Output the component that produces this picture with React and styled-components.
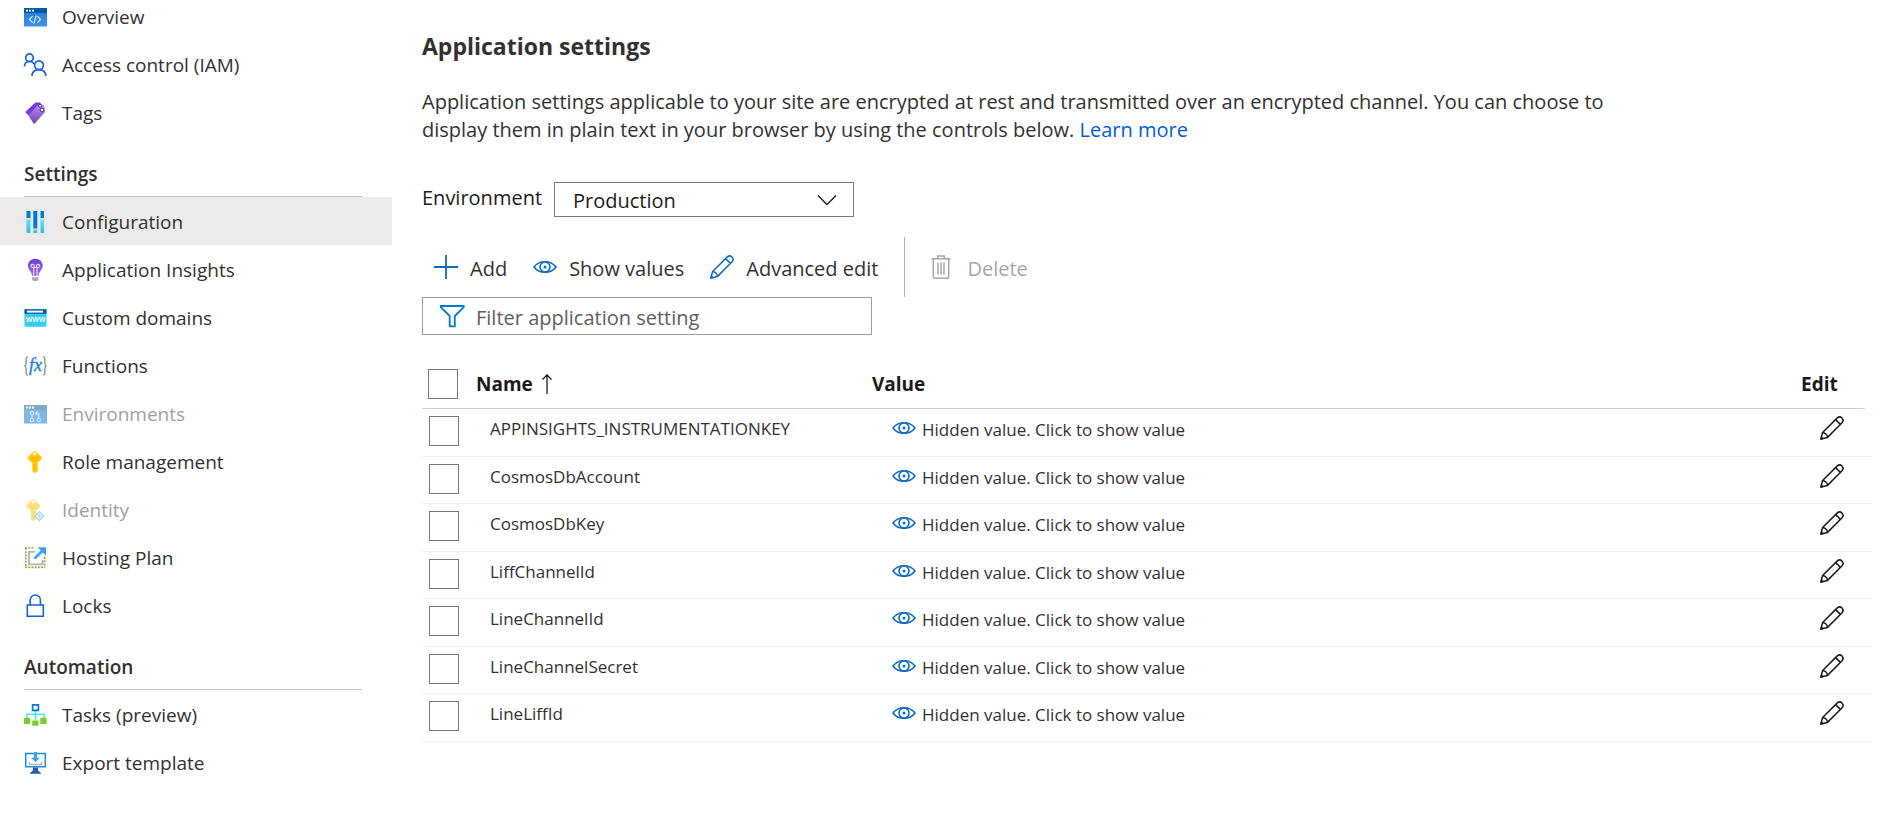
import React from "react";
import styled, { createGlobalStyle, css } from "styled-components";

const GlobalStyle = createGlobalStyle`
  *, *::before, *::after { box-sizing: border-box; }
  body {
    margin: 0;
    background: #fff;
    color: #323130;
    font-family: "Open Sans", "Noto Sans", sans-serif;
    font-size: 19px;
    line-height: 28px;
    overflow: hidden;
  }
  button, input, select { font: inherit; color: inherit; }
`;

/* ---------- icons ---------- */

const Svg = styled.svg`
  display: block;
  flex: none;
  overflow: visible;
`;

const Icon = ({ size = 24, children, ...rest }) => (
  <Svg width={size} height={size} viewBox="0 0 24 24" fill="none" aria-hidden="true" {...rest}>
    {children}
  </Svg>
);

const OverviewIcon = () => (
  <Icon>
    <defs>
      <linearGradient id="ov" x1="0" y1="8" x2="0" y2="22" gradientUnits="userSpaceOnUse">
        <stop stopColor="#2a7fd9" /><stop offset="1" stopColor="#3f94e8" />
      </linearGradient>
    </defs>
    <rect y="3" width="23" height="18.5" rx=".6" fill="url(#ov)" />
    <path d="M0 3.600a.6.6 0 0 1 .6-.6h21.800a.6.6 0 0 1 .6.6V8H0z" fill="#005ba1" />
    <path d="M2 4.800h2v1.800H2zM5 4.800h2v1.800H5zM8 4.800h2v1.800H8z" fill="#fff" />
    <path d="M8.600 11.200 5.400 14.500l3.200 3.200M13.400 11.200l3.200 3.300-3.200 3.200M12.200 10.400 9.800 18.600" stroke="#d6e9fb" strokeWidth="1.200" />
  </Icon>
);

const AccessIcon = () => (
  <Icon stroke="#0f62e0" strokeWidth="1.700">
    <circle cx="5.500" cy="4.700" r="3.800" />
    <circle cx="15" cy="12.200" r="4.400" />
    <path d="M.4 13.500C.6 10.500 2.600 8.500 5.500 8.500c2 0 3.800.9 4.700 2.500M7.900 22.900c.4-3.900 3-6.300 7-6.300s6.600 2.400 7 6.300" />
  </Icon>
);

const TagIcon = () => (
  <Icon>
    <defs>
      <linearGradient id="tg" x1="12" y1="2" x2="11" y2="23" gradientUnits="userSpaceOnUse">
        <stop stopColor="#b796f9" /><stop offset="1" stopColor="#7246ad" />
      </linearGradient>
    </defs>
    <path d="M11.500 1.500h4.500L18 4 6 15.500 1.700 11.700c-.3-.3-.3-.8 0-1.100z" fill="#773adc" />
    <path d="M14.500 3.300 20 4.300l1.200 5.800c0 .6-.1 1-.5 1.400L10.800 22.500c-.4.4-.8.4-1.200 0L5 15.500c-.5-.6-.5-1 0-1.500z" fill="url(#tg)" />
    <circle cx="16" cy="4.700" r="1.500" fill="#fff" stroke="#552f99" />
    <circle cx="18" cy="9" r="1.800" fill="#fff" stroke="#552f99" />
  </Icon>
);

const ConfigIcon = () => (
  <Icon>
    <defs>
      <linearGradient id="cf" x1="0" y1="10" x2="0" y2="23" gradientUnits="userSpaceOnUse">
        <stop stopColor="#50e6ff" /><stop offset="1" stopColor="#32bedd" />
      </linearGradient>
    </defs>
    <path d="M2.500 1h4v7h-4zM9.300 1h4v17.500h-4zM16.500 1h3.500v7h-3.500z" fill="#0078d4" />
    <path d="M2.500 10h4v13h-4zM9.300 20.300h4V23h-4zM16.500 10H20v13h-3.500z" fill="url(#cf)" />
    <path d="M2 9h5M9 19.400h4.800M16 9h4.500" stroke="#c8c8c8" />
  </Icon>
);

const InsightsIcon = () => (
  <Icon>
    <defs>
      <linearGradient id="ai" x1="0" y1="1" x2="0" y2="18" gradientUnits="userSpaceOnUse">
        <stop stopColor="#6a45c8" /><stop offset="1" stopColor="#a06bf5" />
      </linearGradient>
    </defs>
    <path d="M11.300.7c4.200 0 7.400 3.100 7.400 7.100 0 4.300-3.900 5.300-4.100 10.200H8c-.2-4.900-4.100-5.900-4.100-10.200C3.900 3.800 7.100.7 11.300.7z" fill="url(#ai)" />
    <path d="M9.700 18V9.500H8.500a1.600 1.600 0 1 1 1.700-1.700v1.700h2.300V7.800a1.600 1.600 0 1 1 1.700 1.700H13V18" stroke="#e6d8fa" strokeWidth="1.200" />
    <path d="M8 19.200h6.600v2.200L13 23H9.700L8 21.400z" fill="#a9a9a9" />
  </Icon>
);

const WwwText = styled.text`
  font: 600 8px "Open Sans", sans-serif;
`;

const DomainsIcon = () => (
  <Icon>
    <path d="M.5 3.500h22V20a.7.7 0 0 1-.7.700H1.200A.7.7 0 0 1 .5 20z" fill="#32cdf0" />
    <path d="M.5 3.200h22v4.600H.5z" fill="#005ba1" />
    <path d="M3 4.600h16v2H3z" fill="#fff" />
    <WwwText x="11.500" y="16" textAnchor="middle" fill="#fff">www</WwwText>
  </Icon>
);

const FxText = styled.text`
  font: italic 400 18px "Liberation Serif", serif;
`;

const FunctionsIcon = () => (
  <Icon>
    <path d="M4 3C1.800 3 2.200 4.500 2.200 7.500S2 12 .3 12c1.700 0 1.900 1.500 1.900 4.500S1.800 21 4 21M19 3c2.200 0 1.800 1.500 1.800 4.500s.2 4.500 1.900 4.500c-1.700 0-1.900 1.500-1.900 4.500s.4 4.500-1.800 4.500" stroke="#999" strokeWidth="1.500" />
    <FxText x="11.500" y="16.500" textAnchor="middle" fill="#1f80e0" stroke="#1f80e0" strokeWidth=".4">fx</FxText>
  </Icon>
);

const EnvironmentsIcon = () => (
  <Icon>
    <rect y="3" width="23" height="18.500" rx=".6" fill="#7fb8e6" />
    <path d="M0 3h23v4.700H0z" fill="#7fa9cc" />
    <path d="M2 4.500h2v2H2zM5 4.500h2v2H5zM8 4.500h2v2H8z" fill="#fff" />
    <g stroke="#d4e8f8" strokeWidth="1.100">
      <circle cx="8" cy="11.300" r="1.700" />
      <circle cx="8" cy="18" r="1.700" />
      <circle cx="14.700" cy="18" r="1.700" />
      <path d="M8 13v3.300M14.700 16.300v-5h-3M13.500 9.500l-2 1.800 2 1.800" />
    </g>
  </Icon>
);

const KeyShape = () => (
  <>
    <path d="M9.500 1.400c.8-.7 1.700-.7 2.500 0l5.600 5.500c.6.600.6 1.300 0 2L13.700 13v8.200L11.500 23h-1L8.300 21v-8L4 8.900c-.6-.7-.6-1.400 0-2z" fill="#ffca0a" />
    <path d="M7 7.700h8M7 9.800h8" stroke="#ffa800" strokeWidth="1.100" />
    <path d="M10.300 13.500V21" stroke="#ff9c00" strokeOpacity=".6" />
    <circle cx="10.800" cy="3.800" r="1.500" fill="#fff" />
  </>
);

const RoleIcon = () => <Icon><KeyShape /></Icon>;

const IdentityIcon = () => (
  <Icon opacity=".5">
    <g transform="translate(-1.500 0)"><KeyShape /></g>
    <path d="m15.300 13.600 4.900 4.700-4.900 4.500-4.900-4.500z" fill="#7cc4e8" stroke="#3a9bd0" />
    <path d="m12.500 18.500 2.800-3.500 2.800 3.500-2.800 2z" stroke="#e8f6fd" />
  </Icon>
);

const HostingIcon = () => (
  <Icon>
    <path d="M1 2h9M1.800 2v19.600M1 21.400h20M20.600 11v10.500" stroke="#7fba2c" strokeWidth="1.600" strokeDasharray="2 1.200" />
    <path d="M11 5.800H5v12.500h13.500V14" stroke="#b3b3b3" strokeWidth="1.800" />
    <path d="M10.500 12.500 18 5.200" stroke="#3fa0ec" strokeWidth="2.800" />
    <path d="M13.500 1.300H22v8.500z" fill="#3fa0ec" />
  </Icon>
);

const LockIcon = () => (
  <Icon stroke="#0f62e0" strokeWidth="1.600">
    <path d="M3.300 11h16v11.300h-16zM6.200 11V6.300C6.200 3.200 8.400 1 11.300 1s5.100 2.200 5.100 5.300V11" />
  </Icon>
);

const TasksIcon = () => (
  <Icon>
    <path d="M11.500 8v9M3 15v-3.800h17V15" stroke="#50e6ff" strokeWidth="1.600" />
    <path d="M8.600 1.800h5.800v5.600H8.600z" stroke="#0078d4" strokeWidth="1.700" />
    <path d="M0 14.800h6.200V21H0zM8.200 17.600h6.200v5.200H8.200zM16.300 14.800h6.200V21h-6.200z" fill="#7ccc2b" />
  </Icon>
);

const ExportIcon = () => (
  <Icon>
    <path d="M1.700 2.600h19.600v13.200H1.700z" stroke="#1e8de0" strokeWidth="1.500" />
    <path d="M9 16.500h5v3l3 2.500v.8H6V22l3-2.500z" fill="#1b5fae" />
    <path d="M5.500 11v2.500h12V11" stroke="#b3b3b3" strokeWidth="1.500" />
    <path d="M10 1h3v5.800h3L11.500 11 7 6.800h3z" fill="#3fa0ec" />
  </Icon>
);

const PlusIcon = () => (
  <Icon stroke="#0f6cbd" strokeWidth="1.800"><path d="M12 0v24M0 12h24" /></Icon>
);

const EyeIcon = () => (
  <Icon stroke="#0f6cbd" strokeWidth="1.600">
    <path d="M1 12c2.500-3.500 6.300-5.300 11-5.300S20.500 8.500 23 12c-2.500 3.500-6.300 5.300-11 5.300S3.500 15.500 1 12z" />
    <circle cx="12" cy="12" r="5" />
    <circle cx="12" cy="12" r="1.500" fill="#0f6cbd" stroke="none" />
  </Icon>
);

const PencilIcon = ({ color = "#1b1a19" }) => (
  <Icon stroke={color} strokeWidth="1.500" strokeLinejoin="round">
    <path d="m.9 23.100 1.700-6.600L17.300 1.900a3.400 3.400 0 0 1 4.800 4.800L7.500 21.400zM15.600 3.600l4.800 4.800M2.600 16.500c2.500.2 4.700 2.400 4.900 4.900" />
    <path d="m.9 23.100.5-1.900 1.400 1.400z" fill={color} />
  </Icon>
);

const TrashIcon = () => (
  <Icon stroke="#a6a6a6" strokeWidth="1.500">
    <path d="M.5 3.800h19M6.700 3.800V1h6.600v2.800M2.300 3.800v17.400c0 1.200.6 2 1.800 2h11.800c1.200 0 1.800-.8 1.800-2V3.800M7 7.500v12M10 7.500v12M13 7.500v12" />
  </Icon>
);

const FilterIcon = () => (
  <Icon stroke="#0078d4" strokeWidth="1.800">
    <path d="M.8 2h22.900v1.200L14.800 12v10.300H9.700V12L.8 3.200z" />
  </Icon>
);

const SortUpIcon = () => (
  <Icon stroke="#1b1a19" strokeWidth="1.300"><path d="M12 22V3M7.500 7.500 12 3l4.500 4.500" /></Icon>
);

const ChevronIcon = () => (
  <Icon stroke="#1b1a19" strokeWidth="1.300"><path d="m3 7.500 9 9 9-9" /></Icon>
);

/* ---------- layout ---------- */

const Page = styled.div`
  display: flex;
  align-items: flex-start;
`;

const Sidebar = styled.nav`
  flex: none;
  width: 392px;
  margin-top: -8px;
`;

const MenuList = styled.ul`
  list-style: none;
  margin: 0;
  padding: 0;
`;

const MenuLink = styled.a`
  display: flex;
  align-items: center;
  gap: 14px;
  height: 48px;
  padding: 2px 24px 0;
  color: inherit;
  text-decoration: none;
  background: ${(p) => (p.$selected ? "#edebe9" : "transparent")};
  ${(p) => p.$disabled && css`color: #a19f9d;`}
`;

const MenuHeading = styled.h2`
  display: flex;
  align-items: center;
  height: 61px;
  margin: 0 30px 0 24px;
  padding-top: 16px;
  border-bottom: 1px solid #c8c6c4;
  font-size: 19px;
  font-weight: 600;
`;

const Main = styled.main`
  flex: 1;
  min-width: 0;
  padding: 30px 31px 0 30px;
  font-size: 20px;
`;

const Title = styled.h1`
  margin: 0 0 26px;
  font-size: 23px;
  line-height: 32px;
  font-weight: 700;
`;

const Intro = styled.p`
  max-width: 1190px;
  margin: 0 0 38px;
  a { color: #015cda; text-decoration: none; }
`;

const EnvironmentRow = styled.div`
  display: flex;
  align-items: center;
  color: #1b1a19;
  label { min-width: 132px; padding-bottom: 4px; }
`;

const SelectBox = styled.div`
  display: grid;
  align-items: center;
  width: 300px;
  select, svg { grid-area: 1 / 1; }
  svg { justify-self: end; margin-right: 15px; pointer-events: none; }
`;

const Select = styled.select`
  appearance: none;
  width: 100%;
  height: 35px;
  padding: 2px 18px 0;
  border: 1px solid #7a7876;
  border-radius: 0;
  background: #fff;
`;

const Toolbar = styled.div`
  display: flex;
  align-items: center;
  gap: 26px;
  height: 60px;
  margin-top: 20px;
  padding-left: 12px;
`;

const ToolButton = styled.button`
  display: flex;
  align-items: center;
  gap: 12px;
  padding: 0;
  border: 0;
  background: none;
  white-space: nowrap;
  &:disabled { color: #a6a6a6; }
  span { padding-top: 3px; }
`;

const ToolDivider = styled.span`
  width: 1px;
  height: 60px;
  background: #b3b0ad;
`;

const FilterBox = styled.label`
  display: flex;
  align-items: center;
  gap: 12px;
  width: 450px;
  height: 38px;
  padding: 0 17px;
  border: 1px solid #a19f9d;
`;

const FilterInput = styled.input`
  flex: 1;
  min-width: 0;
  padding: 3px 0 0;
  border: 0;
  outline: 0;
  background: none;
  &::placeholder { color: #605e5c; opacity: 1; }
`;

const Table = styled.table`
  display: block;
  margin-top: 24px;
  thead, tbody { display: block; }
`;

const HeaderRow = styled.tr`
  display: grid;
  grid-template-columns: 54px 396px 1fr 64px;
  align-items: center;
  height: 50px;
  margin-right: 7px;
  border-bottom: 1px solid #c7d3e0;
  color: #1b1a19;
  font-size: 19px;
`;

const HeaderCell = styled.th`
  display: flex;
  align-items: center;
  gap: 2px;
  padding: 0 0 0 ${(p) => (p.$check ? "6px" : "0")};
  font-weight: 700;
`;

const Row = styled.tr`
  display: grid;
  grid-template-columns: 68px 402px 1fr 52px;
  align-items: start;
  height: 48px;
  border-bottom: 1px solid #f3f2f1;
  font-size: 17px;
  line-height: 24px;
  &:nth-child(even) { height: 47px; }
`;

const Cell = styled.td`
  padding: 7px 0 0 ${(p) => (p.$check ? "7px" : "0")};
`;

const NameCell = styled(Cell)`
  padding-top: 8px;
`;

const PlainButton = styled.button`
  display: flex;
  align-items: flex-start;
  gap: 6px;
  padding: 0;
  border: 0;
  background: none;
  span { padding-top: 2px; }
`;

const CheckBox = styled.input`
  appearance: none;
  display: block;
  width: 30px;
  height: 30px;
  margin: 0;
  border: 1px solid #7a7876;
  background: #fff;
`;

/* ---------- content ---------- */

const topItems = [
  ["Overview", OverviewIcon],
  ["Access control (IAM)", AccessIcon],
  ["Tags", TagIcon],
];

const settingsItems = [
  ["Configuration", ConfigIcon, "selected"],
  ["Application Insights", InsightsIcon],
  ["Custom domains", DomainsIcon],
  ["Functions", FunctionsIcon],
  ["Environments", EnvironmentsIcon, "disabled"],
  ["Role management", RoleIcon],
  ["Identity", IdentityIcon, "disabled"],
  ["Hosting Plan", HostingIcon],
  ["Locks", LockIcon],
];

const automationItems = [
  ["Tasks (preview)", TasksIcon],
  ["Export template", ExportIcon],
];

const appSettings = [
  "APPINSIGHTS_INSTRUMENTATIONKEY",
  "CosmosDbAccount",
  "CosmosDbKey",
  "LiffChannelId",
  "LineChannelId",
  "LineChannelSecret",
  "LineLiffId",
];

const Menu = ({ items }) => (
  <MenuList>
    {items.map(([label, ItemIcon, state]) => (
      <li key={label}>
        <MenuLink
          href="#"
          $selected={state === "selected"}
          $disabled={state === "disabled"}
          aria-current={state === "selected" ? "page" : undefined}
          aria-disabled={state === "disabled" || undefined}
        >
          <ItemIcon />
          <span>{label}</span>
        </MenuLink>
      </li>
    ))}
  </MenuList>
);

export default function App() {
  return (
    <>
      <GlobalStyle />
      <Page>
        <Sidebar>
          <Menu items={topItems} />
          <MenuHeading>Settings</MenuHeading>
          <Menu items={settingsItems} />
          <MenuHeading>Automation</MenuHeading>
          <Menu items={automationItems} />
        </Sidebar>
        <Main>
          <Title>Application settings</Title>
          <Intro>
            Application settings applicable to your site are encrypted at rest and transmitted over an
            encrypted channel. You can choose to display them in plain text in your browser by using the
            controls below. <a href="#">Learn more</a>
          </Intro>
          <EnvironmentRow>
            <label htmlFor="environment">Environment</label>
            <SelectBox>
              <Select id="environment" defaultValue="Production">
                <option>Production</option>
              </Select>
              <ChevronIcon />
            </SelectBox>
          </EnvironmentRow>
          <Toolbar>
            <ToolButton type="button"><PlusIcon /><span>Add</span></ToolButton>
            <ToolButton type="button"><EyeIcon /><span>Show values</span></ToolButton>
            <ToolButton type="button"><PencilIcon color="#0f6cbd" /><span>Advanced edit</span></ToolButton>
            <ToolDivider />
            <ToolButton type="button" disabled><TrashIcon /><span>Delete</span></ToolButton>
          </Toolbar>
          <FilterBox>
            <FilterIcon />
            <FilterInput type="text" placeholder="Filter application setting" aria-label="Filter application setting" />
          </FilterBox>
          <Table>
            <thead>
              <HeaderRow>
                <HeaderCell $check><CheckBox type="checkbox" aria-label="Select all" /></HeaderCell>
                <HeaderCell>Name<SortUpIcon /></HeaderCell>
                <HeaderCell>Value</HeaderCell>
                <HeaderCell>Edit</HeaderCell>
              </HeaderRow>
            </thead>
            <tbody>
              {appSettings.map((name) => (
                <Row key={name}>
                  <Cell $check><CheckBox type="checkbox" aria-label={name} /></Cell>
                  <NameCell>{name}</NameCell>
                  <Cell>
                    <PlainButton type="button">
                      <EyeIcon />
                      <span>Hidden value. Click to show value</span>
                    </PlainButton>
                  </Cell>
                  <Cell>
                    <PlainButton type="button" aria-label={`Edit ${name}`}><PencilIcon /></PlainButton>
                  </Cell>
                </Row>
              ))}
            </tbody>
          </Table>
        </Main>
      </Page>
    </>
  );
}
